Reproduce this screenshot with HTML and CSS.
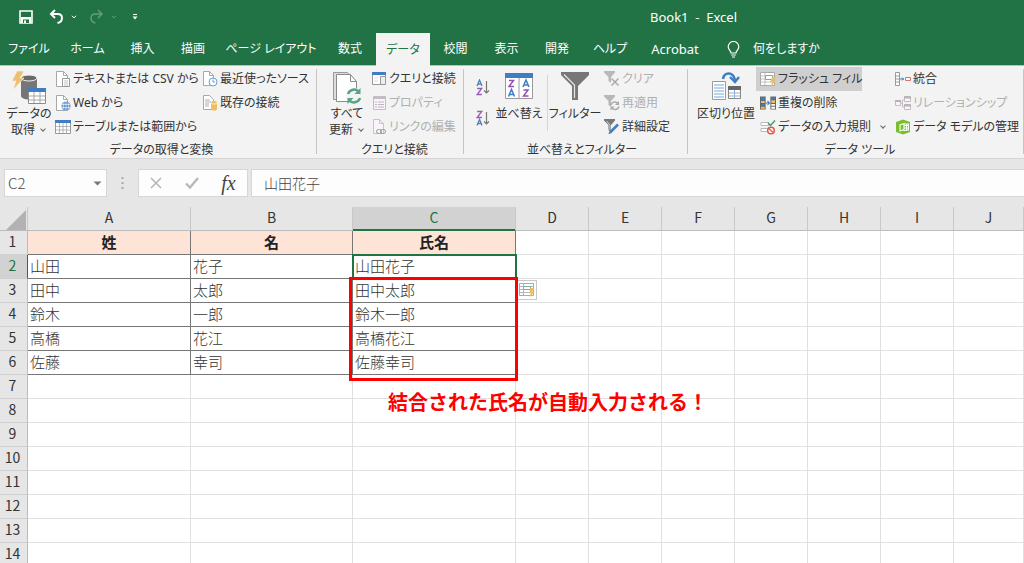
FILE: index.html
```html
<!DOCTYPE html>
<html lang="ja">
<head>
<meta charset="utf-8">
<meta name="viewport" content="width=device-width, initial-scale=1">
<title>Book1 - Excel</title>
<link rel="stylesheet" href="styles.css">
</head>
<body>
<header class="top">
  <div class="titlebar">
    <div class="quick">
      <button class="qbtn" aria-label="上書き保存"><svg width="14" height="14" viewBox="0 0 14 14"><path d="M1 1h12v12H1z" fill="none" stroke="#fff" stroke-width="1.600"/><path d="M2 7h10v6H2z" fill="#fff"/><path d="M4 9.500h6V13H4z" fill="#217346"/><path d="M5 10.500h2V13H5z" fill="#fff"/></svg></button>
      <button class="qbtn" aria-label="元に戻す"><svg width="15" height="15" viewBox="0 0 15 15"><path d="M6 1 2 5l4 4M2 5h6.500c3 0 4.500 1.700 4.500 4s-1.500 4.500-4.500 5" fill="none" stroke="#fff" stroke-width="2"/></svg></button>
      <button class="qbtn narrow" aria-label="元に戻すの一覧"><svg width="6" height="4" viewBox="0 0 6 4"><path d="m.8.800 2.200 2 2.200-2" fill="none" stroke="#fff"/></svg></button>
      <button class="qbtn faded" aria-label="やり直し"><svg width="15" height="15" viewBox="0 0 15 15"><path d="m9 1 4 4-4 4M13 5H6.500C3.500 5 2 6.700 2 9s1.500 4.500 4.500 5" fill="none" stroke="#fff" stroke-width="1.500"/></svg></button>
      <button class="qbtn narrow faded" aria-label="やり直しの一覧"><svg width="6" height="4" viewBox="0 0 6 4"><path d="m.8.800 2.200 2 2.200-2" fill="none" stroke="#fff"/></svg></button>
      <button class="qbtn more" aria-label="クイック アクセスのカスタマイズ"><svg width="6" height="6" viewBox="0 0 6 6"><path d="M1 .5h4" stroke="#fff"/><path d="M.5 2.500h5L3 5.500z" fill="#fff"/></svg></button>
    </div>
    <div class="doc">Book1&nbsp; -&nbsp; Excel</div>
  </div>
  <nav class="tabs">
    <button class="tab">ファイル</button>
    <button class="tab">ホーム</button>
    <button class="tab">挿入</button>
    <button class="tab">描画</button>
    <button class="tab">ページ レイアウト</button>
    <button class="tab">数式</button>
    <button class="tab active">データ</button>
    <button class="tab">校閲</button>
    <button class="tab">表示</button>
    <button class="tab">開発</button>
    <button class="tab">ヘルプ</button>
    <button class="tab latin">Acrobat</button>
    <button class="tab tell"><svg width="13" height="17" viewBox="0 0 13 17"><path d="M4 12C4 9.500 1.200 9 1.200 5.800a5.300 5.300 0 0 1 10.600 0C11.800 9 9 9.500 9 12zM4.200 14h4.600M5 16h3" fill="none" stroke="#fff" stroke-width="1.200"/></svg>何をしますか</button>
  </nav>
</header>

<section class="ribbon">
  <div class="group g1">
    <div class="tools">
      <button class="big"><svg width="36" height="34" viewBox="0 0 36 34"><path d="M10 7v18c0 2 4 3.500 8 3.500s8-1.500 8-3.500V7z" fill="#767676"/><ellipse cx="18" cy="7" rx="8" ry="3" fill="#6a6a6a" stroke="#f3f3f3"/><path d="M6 0h7L9 7h4L2 19l3-9H1z" fill="#eebf6c" stroke="#f3f3f3" stroke-width=".6"/><path d="M17.500 17.500h17v15h-17z" fill="#fff" stroke="#8a8a8a"/><path d="M17 17h18v4H17z" fill="#3f7ec0"/><path d="M18 25h16M18 29h16M23 21v11M29 21v11" stroke="#a6a6a6"/></svg><span>データの<br>取得 <i class="chev"></i></span></button>
      <div class="stack s1">
        <button class="cmd"><svg width="16" height="16" viewBox="0 0 16 16"><path d="M1.500.5h7l4 4v11h-11z" fill="#fff" stroke="#a8a8a8"/><path d="M8.500.5v4h4" fill="none" stroke="#a8a8a8"/><path d="M7.500 7.500h7v8h-7z" fill="#fff" stroke="#999"/><path d="M9 10h4M9 12h4M9 14h4" stroke="#aaa" stroke-width=".7"/></svg>テキストまたは CSV から</button>
        <button class="cmd"><svg width="16" height="16" viewBox="0 0 16 16"><path d="M1.500.5h7l4 4v11h-11z" fill="#fff" stroke="#a8a8a8"/><path d="M8.500.5v4h4" fill="none" stroke="#a8a8a8"/><circle cx="11" cy="11" r="4.500" fill="#5b91ca"/><path d="M7 9.500h8M7 12.500h8M11 6.500v9M9 7.500q-1.500 3.500 0 7M13 7.500q1.500 3.500 0 7" fill="none" stroke="#fff" stroke-width=".6"/></svg>Web から</button>
        <button class="cmd"><svg width="16" height="16" viewBox="0 0 16 16"><path d="M.5 1.500h15v13H.5z" fill="#fff" stroke="#999"/><path d="M0 1h16v3H0z" fill="#3f7ec0"/><path d="M1 7.500h14M1 11h14M4.500 4v10M8 4v10M11.500 4v10" stroke="#a6a6a6" stroke-width=".8"/></svg>テーブルまたは範囲から</button>
      </div>
      <div class="stack">
        <button class="cmd"><svg width="16" height="16" viewBox="0 0 16 16"><path d="M1.500.5h6l4 4v10h-10z" fill="#fff" stroke="#a8a8a8"/><path d="M7.500.5v4h4" fill="none" stroke="#a8a8a8"/><circle cx="11" cy="11" r="4" fill="#fff" stroke="#6fa0d4"/><path d="M11 8.500V11h2" fill="none" stroke="#6fa0d4"/></svg>最近使ったソース</button>
        <button class="cmd"><svg width="16" height="16" viewBox="0 0 16 16"><path d="M1.500.5h6l4 4v10h-10z" fill="#fff" stroke="#a8a8a8"/><path d="M3 5h5M3 7h6M3 9h4M3 11h4" stroke="#999" stroke-width=".8"/><path d="M9 7.500v6.500c0 2 6 2 6 0V7.500c0-2-6-2-6 0" fill="#eebf5f"/><path d="M9 8c1 1.400 5 1.400 6 0" fill="none" stroke="#fff" stroke-width=".7"/></svg>既存の接続</button>
      </div>
    </div>
    <div class="caption">データの取得と変換</div>
  </div>

  <div class="group g2">
    <div class="tools">
      <button class="big"><svg width="30" height="34" viewBox="0 0 30 34"><path d="M1.500 1.500h14l5 5v22h-19z" fill="#ddd" stroke="#999"/><path d="M4.500 3.500h14l6 7v20h-20z" fill="#fff" stroke="#8a8a8a"/><path d="M18.500 3.500v7h6" fill="none" stroke="#8a8a8a"/><circle cx="22" cy="25" r="8" fill="#f3f3f3"/><path d="M16 23a6.300 6.300 0 0 1 11-2M28 27a6.300 6.300 0 0 1-11 2" fill="none" stroke="#58a286" stroke-width="2.500"/><path d="M28.500 17v6h-6zM15.500 33v-6h6z" fill="#58a286"/></svg><span>すべて<br>更新 <i class="chev"></i></span></button>
      <div class="stack">
        <button class="cmd"><svg width="16" height="16" viewBox="0 0 16 16"><path d="M1.500 1.500h13v12h-13z" fill="#fff" stroke="#999"/><path d="M1 1h14v3H1z" fill="#3f7ec0"/><path d="M9.500 5.500h5v8h-5z" fill="#eee" stroke="#999"/><path d="M3 7h4M3 10h4" stroke="#ddd"/></svg>クエリと接続</button>
        <button class="cmd" disabled><svg width="16" height="16" viewBox="0 0 16 16"><path d="M2.500 1.500h12v13h-12z" fill="#faf3fa" stroke="#c4bcc4"/><path d="M2 3h13" stroke="#c4bcc4" stroke-width="2"/><path d="M4 7h2M7 7h6M4 9.500h2M7 9.500h6M4 12h2M7 12h6" stroke="#c0b4c0"/></svg>プロパティ</button>
        <button class="cmd" disabled><svg width="16" height="16" viewBox="0 0 16 16"><path d="M2.500.5h6l4 4v10h-10z" fill="#faf5fa" stroke="#ccc0cc"/><path d="M8.500.5v4h4" fill="none" stroke="#ccc0cc"/><rect x="5.500" y="10.500" width="5" height="4" rx="2" fill="#f3f3f3" stroke="#999"/><rect x="9.500" y="10.500" width="5" height="4" rx="2" fill="none" stroke="#999"/></svg>リンクの編集</button>
      </div>
    </div>
    <div class="caption">クエリと接続</div>
  </div>

  <div class="group g3">
    <div class="tools">
      <div class="orders">
        <button class="order" aria-label="昇順"><svg width="14" height="17" viewBox="0 0 14 17"><path d="m1 7 2.500-6L6 7M2 5h3" fill="none" stroke="#4d83b8" stroke-width="1.300"/><path d="M1.200 9.500h4.500l-4.500 6h4.700" fill="none" stroke="#9b59b6" stroke-width="1.300"/><path d="M10.500 2v12M8 11.500l2.500 2.500 2.500-2.500" fill="none" stroke="#777" stroke-width="1.200"/></svg></button>
        <button class="order" aria-label="降順"><svg width="14" height="17" viewBox="0 0 14 17"><path d="M1.200 1.500h4.500l-4.500 6h4.700" fill="none" stroke="#9b59b6" stroke-width="1.300"/><path d="m1 15.500 2.500-6 2.500 6M2 13.500h3" fill="none" stroke="#4d83b8" stroke-width="1.300"/><path d="M10.500 2v12M8 11.500l2.500 2.500 2.500-2.500" fill="none" stroke="#777" stroke-width="1.200"/></svg></button>
      </div>
      <button class="big"><svg width="30" height="34" viewBox="0 0 30 34"><path d="M1.500 4.500h27v23h-27z" fill="#fff" stroke="#9a9a9a"/><path d="M1 2h28v5H1z" fill="#3f7ec0"/><path d="M15 7v20" stroke="#9a9a9a"/><path d="M5 9.500h4.500l-4.500 6h5M19.500 19H24l-4.500 6h5" fill="none" stroke="#9650b4" stroke-width="1.500"/><path d="m4.500 25.500 3-7 3 7M5.500 23.500h4M19 16l3-7 3 7M20 14h4" fill="none" stroke="#3f7ec0" stroke-width="1.500"/></svg><span>並べ替え</span></button>
      <div class="rule"></div>
      <button class="big"><svg width="30" height="34" viewBox="0 0 30 34"><path d="M1 1h28v3L18 15v14h-6V15L1 4z" fill="#777"/><path d="M4 3.500 14.500 14v13" fill="none" stroke="#e6e6e6" stroke-width="1.200"/></svg><span>フィルター</span></button>
      <div class="stack">
        <button class="cmd" disabled><svg width="16" height="16" viewBox="0 0 16 16"><path d="M0 0h11v1.500L7 6v6L4.500 10V6L0 1.500z" fill="#b8b8b8"/><path d="m7.500 7.500 7 7m0-7-7 7" stroke="#aaa" stroke-width="1.500"/></svg>クリア</button>
        <button class="cmd" disabled><svg width="16" height="16" viewBox="0 0 16 16"><path d="M0 0h11v1.500L7 6v6L4.500 10V6L0 1.500z" fill="#b8b8b8"/><path d="M7 10a4 4 0 0 1 7-1.500M15 11.500a4 4 0 0 1-7 1.500" fill="none" stroke="#aaa" stroke-width="1.500"/><path d="M15 6v4h-4zM6.500 15.500v-4h4z" fill="#aaa"/></svg>再適用</button>
        <button class="cmd"><svg width="16" height="16" viewBox="0 0 16 16"><path d="M0 0h11v1.500L7 6v7L4.500 11V6L0 1.500z" fill="#777"/><path d="M2.500 2 6 6v5" fill="none" stroke="#eee" stroke-width=".8"/><path d="m6 13.500 8-8" stroke="#3f7ec0" stroke-width="2.500"/><path d="m4.500 15 .6-2.500L7 14.400z" fill="#3f7ec0"/></svg>詳細設定</button>
      </div>
    </div>
    <div class="caption">並べ替えとフィルター</div>
  </div>

  <div class="group g4">
    <div class="tools">
      <button class="big"><svg width="30" height="34" viewBox="0 0 30 34"><path d="M1.500 10.500h13v18h-13z" fill="#fff" stroke="#9a9a9a"/><path d="M3 14h10M3 17h10M3 20h10M3 23h10M3 26h10" stroke="#76a6da"/><path d="M17.500 15.500h12v12h-12z" fill="#fff" stroke="#888"/><path d="M17 15h13v4H17z" fill="#666"/><path d="M18 22h11M18 25h11M23.500 19v8" stroke="#8fb1d6"/><path d="M12 8C13 1 22 0 24 9" fill="none" stroke="#3f7ec0" stroke-width="2.600"/><path d="m19 6 5 5 4-5" fill="none" stroke="#3f7ec0" stroke-width="2.400"/></svg><span>区切り位置</span></button>
      <div class="stack s4">
        <button class="cmd on"><svg width="16" height="16" viewBox="0 0 16 16"><path d="M.5 1.500h14v13H.5z" fill="#fff" stroke="#aaa"/><path d="M1 5h13M1 8h13M1 11h13M5 2v12" stroke="#c2c2c2"/><path d="M5.500 4.500h7v4h-7z" fill="#fff" stroke="#7aae95"/><path d="M12 6h4l-2 3.500h2L10.500 16l1.500-5h-2z" fill="#eebf5f"/></svg>フラッシュ フィル</button>
        <button class="cmd"><svg width="16" height="16" viewBox="0 0 17 16"><path d="M0 1h6v14H0zM11 1h6v14h-6z" fill="#666"/><path d="M1 2h4v3H1zM1 9h4v2H1zM12 2h4v2h-4z" fill="#3f7ec0"/><path d="M1 6h4v2H1zM1 12h4v2H1zM12 5h4v3h-4z" fill="#eebf5f"/><path d="M12 9h4v2h-4zM12 12h4v2h-4z" fill="#fff"/><path d="M6 8h4M8 6l2 2-2 2" fill="none" stroke="#3f7ec0" stroke-width="1.200"/></svg>重複の削除</button>
        <button class="cmd"><svg width="16" height="16" viewBox="0 0 16 16"><path d="M1 3.500h8v3H1zM1 9.500h7v3H1z" fill="#fff" stroke="#bbb"/><path d="m8 4 2.500 2.500L15 1.500" fill="none" stroke="#439a7b" stroke-width="1.500"/><circle cx="11" cy="11.500" r="3.300" fill="#fff" stroke="#dc5a47" stroke-width="1.500"/><path d="m9 9.500 4 4" stroke="#dc5a47" stroke-width="1.300"/></svg>データの入力規則 <i class="chev"></i></button>
      </div>
      <div class="stack">
        <button class="cmd"><svg width="16" height="16" viewBox="0 0 16 16"><path d="M.5 1.500h4v13h-4zM1 5h3M1 8h3M1 11h3" fill="#fff" stroke="#999"/><path d="M5 8h4M7 6.500 8.500 8 7 9.500" fill="none" stroke="#3f7ec0"/><path d="M10.500 6.500h5v3h-5z" fill="#fff" stroke="#dc7464"/></svg>統合</button>
        <button class="cmd" disabled><svg width="16" height="16" viewBox="0 0 16 16"><path d="M.5 5.500h5v5h-5zM9.500 1.500h6v5h-6zM9.500 9.500h6v5h-6z" fill="#faf5fa" stroke="#c4bcc4"/><path d="M0 6h6M9 2.500h7M9 10.500h7" stroke="#b8b0b8" stroke-width="2"/><path d="M6 8h1.500v4H9M7.500 8V5H9" fill="none" stroke="#c4bcc4"/></svg>リレーションシップ</button>
        <button class="cmd"><svg width="16" height="16" viewBox="0 0 16 16"><path d="M1 3 8 .5 15 3v10l-7 2.500L1 13z" fill="#78be2e"/><path d="M9 4.500 5 6v6l4-1.500M9 4v8M9 6.500h4.500M9 9h4.500M11.500 5v6M9 4.500l4.500.5v6L9 11.500" fill="none" stroke="#fff" stroke-width="1.100"/></svg>データ モデルの管理</button>
      </div>
    </div>
    <div class="caption">データ ツール</div>
  </div>
</section>

<section class="formula">
  <div class="namebox"><input class="nameinput" aria-label="名前ボックス" value="C2"><svg width="9" height="5" viewBox="0 0 9 5"><path d="M.5.500h8l-4 4z" fill="#777"/></svg></div>
  <svg class="dots" width="3" height="14" viewBox="0 0 3 14"><path d="M.5 1h2v2h-2zM.5 6h2v2h-2zM.5 11h2v2h-2z" fill="#aaa"/></svg>
  <div class="fxbox">
    <button class="fxbtn" aria-label="キャンセル"><svg width="12" height="12" viewBox="0 0 12 12"><path d="m1 1 10 10M11 1 1 11" stroke="#b5b5b5" stroke-width="1.500"/></svg></button>
    <button class="fxbtn" aria-label="入力"><svg width="14" height="12" viewBox="0 0 14 12"><path d="m1 6.500 4 4L13 1" fill="none" stroke="#b9b9b9" stroke-width="2.400"/></svg></button>
    <button class="fxbtn fx" aria-label="関数の挿入">fx</button>
  </div>
  <input class="formulainput" aria-label="数式バー" value="山田花子">
</section>

<main class="sheet">
  <table class="grid">
    <colgroup><col class="crow"><col class="cwide"><col class="cmid"><col class="cwide"><col class="cnar"><col class="cnar"><col class="cnar"><col class="cnar"><col class="cnar"><col class="cnar"><col></colgroup>
    <thead>
      <tr><th class="corner"><svg width="20" height="20" viewBox="0 0 20 20"><path d="M20 0v20H0z" fill="#b2b2b2"/></svg></th><th>A</th><th>B</th><th class="sel">C</th><th>D</th><th>E</th><th>F</th><th>G</th><th>H</th><th>I</th><th>J</th></tr>
    </thead>
    <tbody>
      <tr class="data head"><th>1</th><td>姓</td><td>名</td><td>氏名</td><td></td><td></td><td></td><td></td><td></td><td></td><td></td></tr>
      <tr class="data"><th class="sel">2</th><td>山田</td><td>花子</td><td class="active">山田花子</td><td></td><td></td><td></td><td></td><td></td><td></td><td></td></tr>
      <tr class="data"><th>3</th><td>田中</td><td>太郎</td><td>田中太郎</td><td></td><td></td><td></td><td></td><td></td><td></td><td></td></tr>
      <tr class="data"><th>4</th><td>鈴木</td><td>一郎</td><td>鈴木一郎</td><td></td><td></td><td></td><td></td><td></td><td></td><td></td></tr>
      <tr class="data"><th>5</th><td>高橋</td><td>花江</td><td>高橋花江</td><td></td><td></td><td></td><td></td><td></td><td></td><td></td></tr>
      <tr class="data"><th>6</th><td>佐藤</td><td>幸司</td><td>佐藤幸司</td><td></td><td></td><td></td><td></td><td></td><td></td><td></td></tr>
      <tr><th>7</th><td></td><td></td><td></td><td></td><td></td><td></td><td></td><td></td><td></td><td></td></tr>
      <tr><th>8</th><td></td><td></td><td></td><td></td><td></td><td></td><td></td><td></td><td></td><td></td></tr>
      <tr><th>9</th><td></td><td></td><td></td><td></td><td></td><td></td><td></td><td></td><td></td><td></td></tr>
      <tr><th>10</th><td></td><td></td><td></td><td></td><td></td><td></td><td></td><td></td><td></td><td></td></tr>
      <tr><th>11</th><td></td><td></td><td></td><td></td><td></td><td></td><td></td><td></td><td></td><td></td></tr>
      <tr><th>12</th><td></td><td></td><td></td><td></td><td></td><td></td><td></td><td></td><td></td><td></td></tr>
      <tr><th>13</th><td></td><td></td><td></td><td></td><td></td><td></td><td></td><td></td><td></td><td></td></tr>
      <tr><th>14</th><td></td><td></td><td></td><td></td><td></td><td></td><td></td><td></td><td></td><td></td></tr>
    </tbody>
  </table>
  <button class="smart" aria-label="フラッシュ フィル オプション"><svg width="16" height="16" viewBox="0 0 16 16"><path d="M.5 1.500h14v12H.5z" fill="#fff" stroke="#aaa"/><path d="M1 4.500h13M1 7.500h13M1 10.500h13M4.500 2v11" stroke="#b5b5b5"/><path d="M4.500 4.500h7v3h-7z" fill="#fff" stroke="#7aae95"/><path d="M11.500 6H15l-1.500 3.500h2L10.500 15.500l1-4.500H10z" fill="#eebf5f"/></svg></button>
  <div class="redbox"></div>
  <p class="note">結合された氏名が自動入力される！</p>
</main>
</body>
</html>
```

FILE: styles.css
```css
* {
  box-sizing: border-box;
}

body {
  margin: 0;
  height: 100vh;
  display: flex;
  flex-direction: column;
  overflow: hidden;
  background: #fff;
  color: #333;
  font-family: "Noto Sans", "Noto Sans CJK JP", sans-serif;
  font-size: 12px;
  line-height: 16px;
  font-feature-settings: "palt";
}

button,
input {
  font: inherit;
  font-feature-settings: inherit;
  color: inherit;
  border: 0;
  padding: 0;
  background: none;
}

svg {
  display: block;
  flex: none;
}

/* Title bar and tabs */
.top {
  background: #217346;
  color: #fff;
  flex: none;
}

.titlebar {
  height: 33px;
  display: grid;
  grid-template-columns: 650px 1fr;
  align-items: center;
}

.doc {
  font-size: 13px;
}

.quick {
  display: flex;
  align-items: center;
  padding-left: 19px;
}

.qbtn {
  display: flex;
  margin-right: 16px;
}

.qbtn:nth-child(2),
.qbtn:nth-child(4) {
  margin-right: 7px;
}

.qbtn.narrow {
  margin-right: 12px;
}

.qbtn.more {
  margin-left: 3px;
}

.faded {
  opacity: 0.3;
}

.tabs {
  display: grid;
  grid-template-columns: 58px 59px 51px 50px 106px 52px 54px 51px 51px 50px 56px 74px auto;
  justify-content: start;
  height: 32px;
}

.tab {
  white-space: nowrap;
}

.tab.active {
  position: relative;
  margin-bottom: -1px;
  background: #f3f3f3;
  color: #217346;
}

.tab.latin {
  font-size: 13px;
}

.tab.tell {
  display: flex;
  align-items: center;
  gap: 13px;
  padding-left: 15px;
}

/* Ribbon */
.ribbon {
  flex: none;
  display: flex;
  background: #f3f3f3;
  border-top: 1px solid #a6cdb6;
  border-bottom: 1px solid #d5d5d5;
  height: 94px;
}

.group {
  position: relative;
  display: flex;
  flex-direction: column;
  flex: none;
  padding-top: 1px;
}

.group::after {
  content: "";
  position: absolute;
  right: 0;
  top: 3px;
  bottom: 4px;
  width: 1px;
  background: #c6c6c6;
}

.g1 { width: 317px; padding-left: 6px; }
.g2 { width: 147px; padding-left: 8px; }
.g3 { width: 224px; padding-left: 12px; }
.g4 { width: 336px; padding-left: 8px; }

.tools {
  display: flex;
}

.big {
  display: flex;
  flex-direction: column;
  align-items: center;
  gap: 1px;
  padding-top: 4px;
  line-height: 16px;
  white-space: nowrap;
}

.g1 .big { width: 46px; margin-right: 3px; }
.g2 .big { width: 44px; margin-right: 2px; }
.g3 .big { width: 52px; }
.g4 .big { width: 60px; }

.chev {
  display: inline-block;
  width: 4px;
  height: 4px;
  margin: 0 2px 3px 3px;
  border: solid #666;
  border-width: 0 1px 1px 0;
  transform: rotate(45deg);
}

.stack {
  display: flex;
  flex-direction: column;
  align-items: flex-start;
}

.g3 .stack { margin-left: 3px; }

.s1 { width: 147px; }
.s4 { width: 135px; }

.cmd {
  display: flex;
  align-items: center;
  gap: 2px;
  height: 24px;
  white-space: nowrap;
}

.g4 .cmd {
  padding-left: 4px;
}

.g4 .cmd .chev {
  margin-left: 8px;
}

.cmd:disabled {
  color: #b0b0b0;
}

.cmd.on {
  background: #cfcfcf;
}

.orders {
  display: flex;
  flex-direction: column;
  gap: 14px;
  padding: 12px 3px 0 0;
}

.order {
  display: flex;
}

.rule {
  width: 1px;
  height: 56px;
  margin: 8px 1px 0 2px;
  background: #d6d6d6;
}

.caption {
  text-align: center;
  line-height: 22px;
}

/* Formula bar */
.formula {
  flex: none;
  display: flex;
  align-items: center;
  height: 48px;
  padding-left: 4px;
  background: #e6e6e6;
  font-family: "Noto Sans CJK JP", sans-serif;
  font-size: 14px;
  font-weight: 300;
  font-feature-settings: normal;
  color: #444;
}

.namebox,
.fxbox,
.formulainput {
  height: 28px;
  background: #fdfdfd;
  border: 1px solid #d6d6d6;
}

.namebox {
  width: 103px;
  display: flex;
  align-items: center;
  padding: 0 4px 0 3px;
}

.nameinput {
  flex: 1;
  min-width: 0;
  font-size: 15px;
}

.dots {
  margin: 0 14px;
}

.fxbox {
  width: 110px;
  display: flex;
  justify-content: space-around;
  align-items: center;
  margin-right: 3px;
}

.fx {
  font: italic 20px "Liberation Serif", serif;
  color: #444;
}

.formulainput {
  flex: 1;
  min-width: 0;
  padding-left: 12px;
  border-right: 0;
}

/* Worksheet */
.sheet {
  position: relative;
  flex: 1;
  min-height: 0;
  overflow: hidden;
  font-family: "Noto Sans CJK JP", sans-serif;
  font-feature-settings: normal;
}

.grid {
  width: 100%;
  table-layout: fixed;
  border-collapse: separate;
  border-spacing: 0;
  font-size: 15px;
  line-height: 21px;
}

.crow { width: 28px; }
.cwide { width: 163px; }
.cmid { width: 162px; }
.cnar { width: 73px; }

th,
td {
  height: 24px;
  padding: 0 0 2px;
  border-right: 1px solid #e0e0e0;
  border-bottom: 1px solid #e0e0e0;
  white-space: nowrap;
}

th {
  background: #e6e6e6;
  font-size: 14px;
  font-weight: 400;
  border-bottom-color: #d0d0d0;
  border-right-color: #bcbcbc;
}

thead th {
  border-bottom-color: #bcbcbc;
  border-right-color: #c8c8c8;
}

tbody th {
  padding-right: 2px;
}

.corner svg {
  margin: 2px 0 0 6px;
}

.corner {
  padding: 0;
}

th.sel {
  background: #d2d2d2;
  color: #217346;
}

thead th.sel {
  box-shadow: inset 0 -1px #217346;
  border-bottom-color: #217346;
}

tbody th.sel {
  border-right-color: #217346;
}

.data td:nth-child(-n+4) {
  padding-left: 2px;
  font-weight: 300;
  border-color: #777;
}

.head td:nth-child(-n+4) {
  padding-left: 0;
  text-align: center;
  font-weight: 700;
  color: #222;
  background: #fde4d7;
}

.data td.active {
  outline: 2px solid #217346;
  outline-offset: -1px;
}

.smart {
  position: absolute;
  left: 517px;
  top: 73px;
  width: 20px;
  height: 20px;
  padding: 1px;
  background: #fff;
  border: 1px solid #c8c8c8;
}

.redbox {
  position: absolute;
  left: 349px;
  top: 70px;
  width: 169px;
  height: 104px;
  border: 3px solid #f00;
}

.note {
  position: absolute;
  left: 388px;
  top: 182px;
  margin: 0;
  font-size: 20px;
  font-weight: 700;
  line-height: 26px;
  color: #f00;
  white-space: nowrap;
}
```
